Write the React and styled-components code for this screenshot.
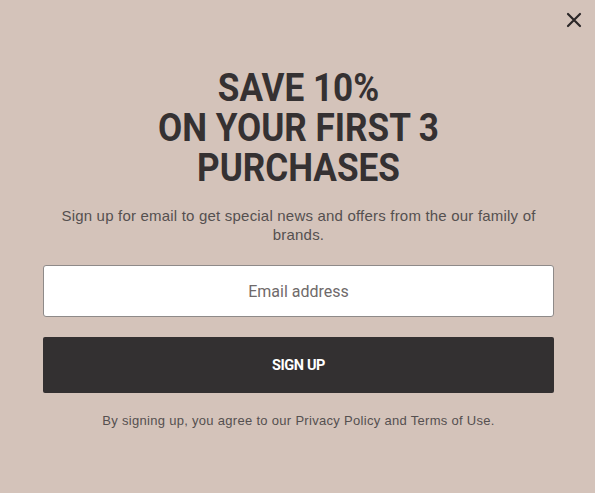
import React from "react";
import styled, { createGlobalStyle } from "styled-components";

const Global = createGlobalStyle`
  html, body { margin: 0; padding: 0; background: #d4c3ba; }
  body { font-family: "Liberation Sans", Arial, sans-serif; }
`;

const Modal = styled.div`
  position: relative;
  width: 595px;
  height: 493px;
  box-sizing: border-box;
  background: #d4c3ba;
  padding: 68px 41px 0 43px;
  display: flex;
  flex-direction: column;
  align-items: stretch;
`;

const Close = styled.button`
  position: absolute;
  top: 12px;
  right: 13px;
  width: 16px;
  height: 16px;
  padding: 0;
  border: 0;
  background: transparent;
  cursor: pointer;
  display: flex;
`;

const Heading = styled.h1`
  margin: 0;
  text-align: center;
  font-family: "Roboto", "Liberation Sans", sans-serif;
  font-weight: 700;
  font-size: 39px;
  line-height: 40px;
  color: #353132;
  text-transform: uppercase;
  letter-spacing: 0;
  transform: scaleX(0.9);
`;

const Sub = styled.p`
  margin: 18px 0 0;
  text-align: center;
  font-family: "Liberation Sans", Arial, sans-serif;
  font-size: 15px;
  line-height: 19px;
  letter-spacing: 0.2px;
  color: #555050;
  padding: 0 8px;
`;

const Input = styled.input`
  margin-top: 21px;
  height: 52px;
  box-sizing: border-box;
  width: 100%;
  background: #fff;
  border: 1px solid #8e8a89;
  border-radius: 3px;
  text-align: center;
  font-family: "Roboto", "Liberation Sans", sans-serif;
  font-size: 16px;
  color: #333;
  &::placeholder { color: #6f6a6a; }
`;

const Button = styled.button`
  margin-top: 20px;
  height: 56px;
  width: 100%;
  border: 0;
  border-radius: 2px;
  background: #333031;
  color: #fff;
  font-family: "Roboto", sans-serif;
  font-weight: 700;
  font-size: 14.5px;
  letter-spacing: -0.4px;
  text-transform: uppercase;
`;

const Legal = styled.p`
  margin: 19px 0 0;
  text-align: center;
  font-family: "Liberation Sans", Arial, sans-serif;
  font-size: 13px;
  line-height: 18px;
  letter-spacing: 0.3px;
  color: #555050;
`;

export default function App() {
  return (
    <>
      <Global />
      <Modal>
        <Close aria-label="Close">
          <svg width="16" height="16" viewBox="0 0 16 16">
            <path d="M2 2 L14 14 M14 2 L2 14" stroke="#2b2728" strokeWidth="2.2" strokeLinecap="round" />
          </svg>
        </Close>
        <Heading>
          Save 10%
          <br />
          on your first 3
          <br />
          purchases
        </Heading>
        <Sub>Sign up for email to get special news and offers from the our family of brands.</Sub>
        <Input placeholder="Email address" />
        <Button>Sign up</Button>
        <Legal>By signing up, you agree to our Privacy Policy and Terms of Use.</Legal>
      </Modal>
    </>
  );
}
